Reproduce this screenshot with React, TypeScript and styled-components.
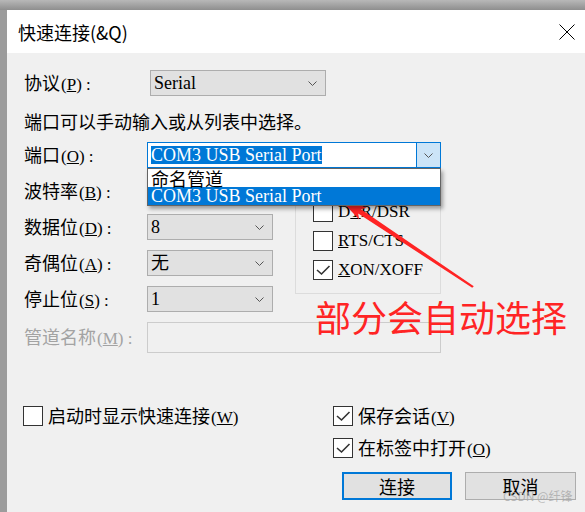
import React from "react";
import styled, { createGlobalStyle } from "styled-components";

const GlobalStyle = createGlobalStyle`
  html, body { margin: 0; padding: 0; }
  body {
    width: 585px;
    height: 512px;
    overflow: hidden;
    font-family: "Noto Sans CJK SC", "Noto Sans", sans-serif;
    color: #000;
  }
  * { box-sizing: border-box; }
`;

const Screen = styled.div`
  position: relative;
  width: 585px;
  height: 512px;
  padding: 10px 0 0 7px;
  background: linear-gradient(to bottom, #b8b8b8 0, #8e8e8e 10px, #9c9c9c 10px);
  overflow: hidden;
`;

const Dialog = styled.div`
  display: flex;
  flex-direction: column;
  height: 100%;
  background: #f0f0f0;
`;

const TitleBar = styled.div`
  flex-shrink: 0;
  height: 43px;
  background: #fff;
  display: flex;
  align-items: center;
  justify-content: space-between;
  padding: 0 10px 0 11px;
`;

const Title = styled.span`
  font-size: 18px;
  line-height: 1;
`;

const Body = styled.div`
  flex: 1;
  display: flex;
  flex-direction: column;
  padding: 17px 9px 0 17px;
`;

const Row = styled.div`
  display: flex;
  align-items: center;
  height: 26px;
`;

const FieldLabel = styled.span<{ $disabled?: boolean; $width?: number }>`
  font-size: 18px;
  line-height: 18px;
  white-space: nowrap;
  align-self: center;
  grid-column: 1;
  color: ${(p) => (p.$disabled ? "#a3a3a3" : "#000")};
  ${(p) => (p.$width ? `width: ${p.$width}px; flex-shrink: 0;` : "")}
`;

const Latin = styled.span`
  font-family: "Liberation Serif", serif;
  font-size: 17px;
  margin-left: 1px;
`;

const Hint = styled.div`
  margin-top: 16px;
  font-size: 18px;
  line-height: 18px;
  white-space: nowrap;
`;

const FormGrid = styled.div`
  display: grid;
  grid-template-columns: 123px 126px 22px 146px;
  grid-template-rows: repeat(5, 26px) 31px;
  row-gap: 10px;
  margin-top: 12px;
`;

const Select = styled.div<{ $width?: number }>`
  grid-column: 2;
  display: flex;
  align-items: center;
  justify-content: space-between;
  height: 26px;
  width: ${(p) => (p.$width ? `${p.$width}px` : "100%")};
  border: 1px solid #adadad;
  background: #e1e1e1;
  padding: 0 8px 0 3px;
`;

const Value = styled.span`
  font-family: "Liberation Serif", "Noto Sans CJK SC", serif;
  font-size: 18px;
  line-height: 18px;
  white-space: nowrap;
`;

const ComboWrap = styled.div`
  grid-column: 2 / 5;
  position: relative;
  z-index: 5;
`;

const Combo = styled.div`
  display: flex;
  height: 26px;
  border: 1px solid #0078d7;
  background: #fff;
`;

const ComboText = styled.div`
  flex: 1;
  display: flex;
  align-items: center;
  padding-left: 3px;
`;

const Selected = styled(Value)`
  background: #0078d7;
  color: #fff;
`;

const ComboButton = styled.div`
  width: 24px;
  display: flex;
  align-items: center;
  justify-content: center;
  background: #cce4f7;
  border-left: 1px solid #0078d7;
`;

const DropList = styled.div`
  position: absolute;
  top: 26px;
  left: 0;
  right: 0;
  background: #fff;
  border: 1px solid #646464;
  box-shadow: 2px 3px 4px rgba(0, 0, 0, 0.35);
`;

const DropItem = styled.div<{ $active?: boolean }>`
  height: 18px;
  display: flex;
  align-items: center;
  padding-left: 3px;
  font-size: 18px;
  line-height: 18px;
  background: ${(p) => (p.$active ? "#0078d7" : "#fff")};
  color: ${(p) => (p.$active ? "#fff" : "#000")};
`;

const TextInput = styled.div`
  grid-column: 2 / 5;
  border: 1px solid #cccccc;
  background: #f0f0f0;
`;

const GroupBox = styled.div`
  grid-column: 4;
  grid-row: 2 / span 4;
  align-self: start;
  height: 116px;
  border: 1px solid #dcdcdc;
  padding: 23px 0 0 17px;
  display: flex;
  flex-direction: column;
  gap: 9px;
`;

const CheckRow = styled.label`
  display: flex;
  align-items: center;
  gap: 5px;
  height: 20px;
  font-size: 18px;
  line-height: 20px;
  white-space: nowrap;
`;

const Box = styled.span`
  width: 20px;
  height: 20px;
  flex-shrink: 0;
  border: 1px solid #333;
  background: #fff;
  display: flex;
`;

const SerifLabel = styled.span`
  font-family: "Liberation Serif", serif;
  font-size: 17px;
`;

const Footer = styled.div`
  display: flex;
  justify-content: space-between;
  align-items: flex-start;
  margin: 53px 0 0 -1px;
`;

const RightColumn = styled.div`
  width: 243px;
  display: flex;
  flex-direction: column;
  gap: 12px;
`;

const Buttons = styled.div`
  display: flex;
  justify-content: flex-end;
  gap: 13px;
  margin-top: 2px;
`;

const Button = styled.div<{ $primary?: boolean; $width: number }>`
  width: ${(p) => p.$width}px;
  height: 28px;
  display: flex;
  align-items: center;
  justify-content: center;
  font-size: 18px;
  background: #e1e1e1;
  border: ${(p) => (p.$primary ? "2px solid #0078d7" : "1px solid #adadad")};
`;

const Note = styled.div`
  position: absolute;
  left: 315px;
  top: 298px;
  font-size: 36px;
  line-height: 36px;
  color: #ff2424;
  white-space: nowrap;
  pointer-events: none;
`;

const ArrowSvg = styled.svg`
  position: absolute;
  left: 330px;
  top: 190px;
  pointer-events: none;
`;

const Watermark = styled.div`
  position: absolute;
  left: 503px;
  top: 489px;
  font-size: 12px;
  line-height: 14px;
  color: rgba(165, 165, 165, 0.75);
  white-space: nowrap;
`;

const Chevron = () => (
  <svg width="9" height="5" viewBox="0 0 9 5">
    <path d="M0.5 0.5 L4.5 4.5 L8.5 0.5" fill="none" stroke="#555" strokeWidth="1" />
  </svg>
);

const CloseIcon = () => (
  <svg width="16" height="16" viewBox="0 0 16 16">
    <path d="M0.5 0.5 L15.5 15.5 M15.5 0.5 L0.5 15.5" stroke="#000" strokeWidth="1" />
  </svg>
);

const Check = ({ checked, children }: { checked?: boolean; children: React.ReactNode }) => (
  <CheckRow>
    <Box>
      {checked && (
        <svg width="18" height="18" viewBox="0 0 18 18">
          <path d="M3 9 L7.5 13 L15.5 5" fill="none" stroke="#333" strokeWidth="1.6" />
        </svg>
      )}
    </Box>
    {children}
  </CheckRow>
);

const Label = ({ cn, hot, disabled, width }: { cn: string; hot: string; disabled?: boolean; width?: number }) => (
  <FieldLabel $disabled={disabled} $width={width}>
    {cn}
    <Latin>
      (<u>{hot}</u>) :
    </Latin>
  </FieldLabel>
);

// 波特率 is covered by the open list, so it shows no value
const plainSelects = [
  { cn: "波特率", hot: "B", value: "" },
  { cn: "数据位", hot: "D", value: "8" },
  { cn: "奇偶位", hot: "A", value: "无" },
  { cn: "停止位", hot: "S", value: "1" },
];

export default function App() {
  return (
    <>
      <GlobalStyle />
      <Screen>
        <Dialog>
          <TitleBar>
            <Title>快速连接(&amp;Q)</Title>
            <CloseIcon />
          </TitleBar>
          <Body>
            <Row>
              <Label cn="协议" hot="P" width={126} />
              <Select $width={176}>
                <Value>Serial</Value>
                <Chevron />
              </Select>
            </Row>
            <Hint>端口可以手动输入或从列表中选择。</Hint>
            <FormGrid>
              <GroupBox>
                <Check>
                  <SerifLabel>
                    D<u>T</u>R/DSR
                  </SerifLabel>
                </Check>
                <Check>
                  <SerifLabel>
                    <u>R</u>TS/CTS
                  </SerifLabel>
                </Check>
                <Check checked>
                  <SerifLabel>
                    <u>X</u>ON/XOFF
                  </SerifLabel>
                </Check>
              </GroupBox>

              <Label cn="端口" hot="O" />
              <ComboWrap>
                <Combo>
                  <ComboText>
                    <Selected>COM3 USB Serial Port</Selected>
                  </ComboText>
                  <ComboButton>
                    <Chevron />
                  </ComboButton>
                </Combo>
                <DropList>
                  <DropItem>命名管道</DropItem>
                  <DropItem $active>
                    <Value>COM3 USB Serial Port</Value>
                  </DropItem>
                </DropList>
              </ComboWrap>

              {plainSelects.map((s) => (
                <React.Fragment key={s.hot}>
                  <Label cn={s.cn} hot={s.hot} />
                  <Select>
                    {s.value ? <Value>{s.value}</Value> : <span />}
                    <Chevron />
                  </Select>
                </React.Fragment>
              ))}

              <Label cn="管道名称" hot="M" disabled />
              <TextInput />
            </FormGrid>

            <Footer>
              <Check>
                <span>
                  启动时显示快速连接<Latin>(<u>W</u>)</Latin>
                </span>
              </Check>
              <RightColumn>
                <Check checked>
                  <span>
                    保存会话<Latin>(<u>V</u>)</Latin>
                  </span>
                </Check>
                <Check checked>
                  <span>
                    在标签中打开<Latin>(<u>O</u>)</Latin>
                  </span>
                </Check>
                <Buttons>
                  <Button $primary $width={110}>连接</Button>
                  <Button $width={111}>取消</Button>
                </Buttons>
              </RightColumn>
            </Footer>
          </Body>
        </Dialog>

        <ArrowSvg width="150" height="100" viewBox="330 190 150 100">
          <polygon
            points="338,197 366.9,207.8 361,209.3 473.8,286.3 472.2,287.7 358.2,213.5 359.1,219.4"
            fill="#ff2424"
          />
        </ArrowSvg>
        <Note>部分会自动选择</Note>
        <Watermark>CSDN @纤锋</Watermark>
      </Screen>
    </>
  );
}
